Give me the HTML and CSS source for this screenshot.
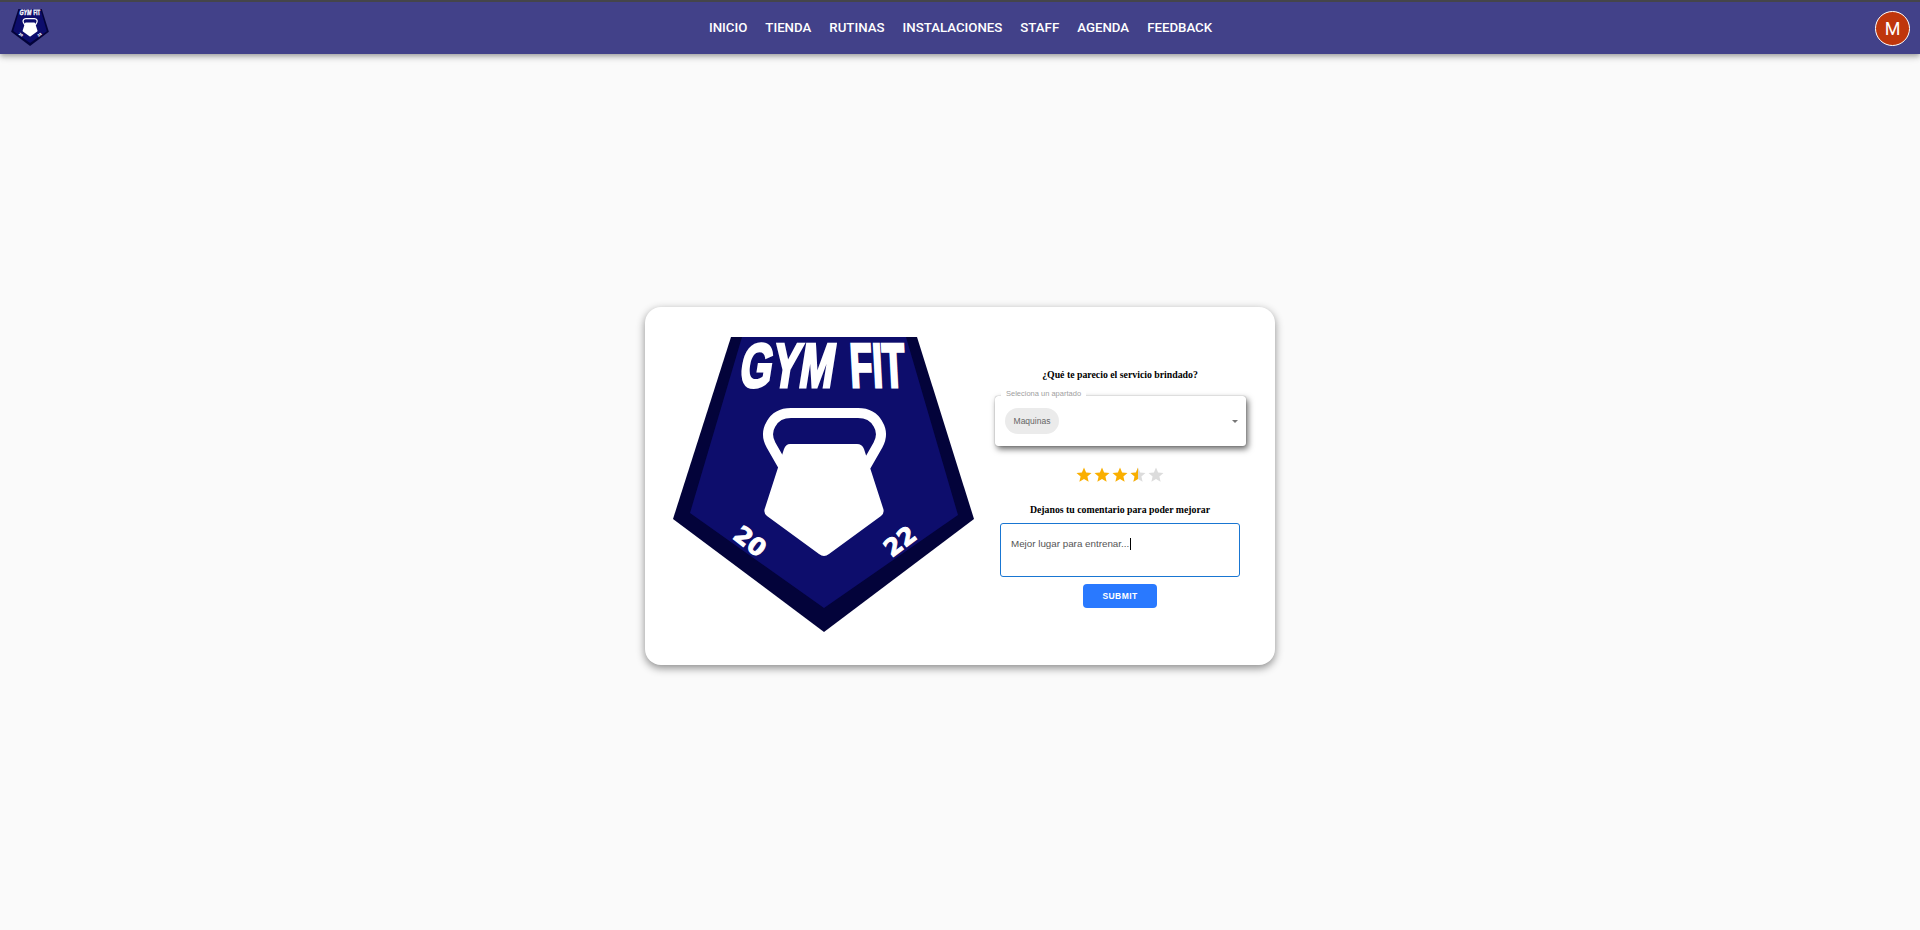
FILE: index.html
```html
<!DOCTYPE html>
<html lang="es">
<head>
<meta charset="utf-8">
<title>Gym Fit - Feedback</title>
<link rel="stylesheet" href="styles.css">
</head>
<body>
<header class="topbar">
  <a class="brand" href="#">
    <svg class="brand-logo" viewBox="673 337 301 295">
      <polygon class="logo-outer" points="731,337 917,337 974,519 824,632 673,519"/>
      <polygon class="logo-inner" points="742,337 906,337 958,515 824,608 690,513"/>
      <path class="logo-handle" d="M783 466 L771 445 Q765 434 771 424 Q777 413 791 413 H858 Q872 413 878 424 Q884 434 878 445 L866 466"/>
      <path class="logo-body" d="M790 444 H857 Q862 444 864 449 L883 508 Q885 513 881 516 L829 554 Q824 558 819 554 L767 516 Q763 513 765 508 L784 449 Q786 444 790 444 Z"/>
      <text class="logo-title" transform="translate(738 387) skewX(-9)" textLength="94" lengthAdjust="spacingAndGlyphs">GYM</text>
      <text class="logo-title" transform="translate(851 387) skewX(3)" textLength="55" lengthAdjust="spacingAndGlyphs">FIT</text>
      <text class="logo-year" transform="translate(745 548) rotate(38)" text-anchor="middle">20</text>
      <text class="logo-year" transform="translate(905 548) rotate(-37)" text-anchor="middle">22</text>
    </svg>
  </a>
  <nav class="nav">
    <a href="#">Inicio</a>
    <a href="#">Tienda</a>
    <a href="#">Rutinas</a>
    <a href="#">Instalaciones</a>
    <a href="#">Staff</a>
    <a href="#">Agenda</a>
    <a href="#">Feedback</a>
  </nav>
  <div class="account"><span class="avatar">M</span></div>
</header>

<main class="page">
  <section class="card">
    <svg class="card-logo" viewBox="673 337 301 295">
      <polygon class="logo-outer" points="731,337 917,337 974,519 824,632 673,519"/>
      <polygon class="logo-inner" points="742,337 906,337 958,515 824,608 690,513"/>
      <path class="logo-handle" d="M783 466 L771 445 Q765 434 771 424 Q777 413 791 413 H858 Q872 413 878 424 Q884 434 878 445 L866 466"/>
      <path class="logo-body" d="M790 444 H857 Q862 444 864 449 L883 508 Q885 513 881 516 L829 554 Q824 558 819 554 L767 516 Q763 513 765 508 L784 449 Q786 444 790 444 Z"/>
      <text class="logo-title" transform="translate(738 387) skewX(-9)" textLength="94" lengthAdjust="spacingAndGlyphs">GYM</text>
      <text class="logo-title" transform="translate(851 387) skewX(3)" textLength="55" lengthAdjust="spacingAndGlyphs">FIT</text>
      <text class="logo-year" transform="translate(745 548) rotate(38)" text-anchor="middle">20</text>
      <text class="logo-year" transform="translate(905 548) rotate(-37)" text-anchor="middle">22</text>
    </svg>
    <form class="form">
      <h4 class="question">¿Qué te parecio el servicio brindado?</h4>
      <div class="select">
        <span class="select-label">Seleciona un apartado</span>
        <span class="chip">Maquinas</span>
        <span class="select-arrow"></span>
      </div>
      <div class="rating">
        <svg class="star full" viewBox="0 0 24 24"><path d="M12 17.27L18.18 21l-1.64-7.03L22 9.24l-7.19-.61L12 2 9.19 8.63 2 9.24l5.46 4.73L5.82 21z"/></svg>
        <svg class="star full" viewBox="0 0 24 24"><path d="M12 17.27L18.18 21l-1.64-7.03L22 9.24l-7.19-.61L12 2 9.19 8.63 2 9.24l5.46 4.73L5.82 21z"/></svg>
        <svg class="star full" viewBox="0 0 24 24"><path d="M12 17.27L18.18 21l-1.64-7.03L22 9.24l-7.19-.61L12 2 9.19 8.63 2 9.24l5.46 4.73L5.82 21z"/></svg>
        <svg class="star" viewBox="0 0 24 24"><path d="M12 17.27L18.18 21l-1.64-7.03L22 9.24l-7.19-.61L12 2 9.19 8.63 2 9.24l5.46 4.73L5.82 21z"/><path class="half" d="M12 2 9.19 8.63 2 9.24l5.46 4.73L5.82 21 12 17.27z"/></svg>
        <svg class="star" viewBox="0 0 24 24"><path d="M12 17.27L18.18 21l-1.64-7.03L22 9.24l-7.19-.61L12 2 9.19 8.63 2 9.24l5.46 4.73L5.82 21z"/></svg>
      </div>
      <h4 class="question second">Dejanos tu comentario para poder mejorar</h4>
      <div class="comment"><span class="comment-text">Mejor lugar para entrenar...</span></div>
      <button class="submit" type="button">Submit</button>
    </form>
  </section>
</main>
</body>
</html>
```

FILE: styles.css
```css
* { box-sizing: border-box; }

html, body {
  margin: 0;
  height: 100%;
}

body {
  background: #fafafa;
  font-family: "Liberation Sans", Arial, sans-serif;
  overflow: hidden;
}

svg { overflow: visible; }

.topbar {
  height: 54px;
  border-top: 2px solid #45454a;
  background: #424189;
  display: flex;
  align-items: center;
  padding: 0 10px 0 11px;
  box-shadow: 0 2px 4px -1px rgba(0,0,0,.2), 0 4px 5px rgba(0,0,0,.14), 0 1px 10px rgba(0,0,0,.12);
  position: relative;
}

.brand {
  flex: 1;
  display: flex;
  margin-top: -2px;
}

.brand-logo {
  width: 38px;
  height: 37px;
}

.nav {
  display: flex;
  justify-content: center;
}

.nav a {
  padding: 6px 8px;
  margin: 0 1px;
  color: #fff;
  font-family: Roboto, "Liberation Sans", sans-serif;
  text-decoration: none;
  text-transform: uppercase;
  font-size: 13.25px;
  font-weight: 500;
  line-height: 24px;
}

.account {
  flex: 1;
  display: flex;
  justify-content: flex-end;
}

.avatar {
  width: 35px;
  height: 35px;
  border-radius: 50%;
  border: 1px solid #fff;
  background: #bf360c;
  color: #fff;
  font-family: Roboto, "Liberation Sans", sans-serif;
  font-size: 18px;
  display: flex;
  align-items: center;
  justify-content: center;
}

.page {
  height: 876px;
  display: flex;
  align-items: flex-start;
  justify-content: center;
  padding-top: 253px;
}

.card {
  width: 630px;
  height: 358px;
  background: #fff;
  border-radius: 16px;
  box-shadow: 0 3px 8px rgba(0,0,0,.45);
  display: flex;
  align-items: flex-start;
  padding: 30px 29px 0 28px;
  gap: 21px;
}

.card-logo {
  width: 301px;
  height: 295px;
  flex: none;
}

.logo-outer { fill: #03033a; }
.logo-inner { fill: #0d0d6c; }
.logo-handle { fill: none; stroke: #fff; stroke-width: 10; }
.logo-body { fill: #fff; }

.logo-title {
  font-family: "Liberation Sans", sans-serif;
  font-weight: 700;
  font-size: 62px;
  fill: #fff;
  stroke: #fff;
  stroke-width: 3;
}

.logo-year {
  font-family: "DejaVu Sans", sans-serif;
  font-weight: 700;
  font-size: 24px;
  fill: #fff;
  stroke: #fff;
  stroke-width: 1;
}

.form {
  flex: 1;
  display: flex;
  flex-direction: column;
  align-items: center;
  padding: 31px 1px 0 0;
}

.question {
  margin: 0;
  font-family: "Liberation Serif", serif;
  font-size: 9.8px;
  line-height: 14px;
  font-weight: 700;
  color: #000;
  text-align: center;
}

.select {
  position: relative;
  width: 251px;
  height: 50px;
  margin: 14px -1px 0 0;
  background: #fff;
  border-radius: 3px;
  box-shadow: 2px 3px 6px rgba(0,0,0,.6), 0 0 1px rgba(0,0,0,.5);
  display: flex;
  align-items: center;
  padding-left: 10px;
}

.select-label {
  position: absolute;
  left: 6px;
  top: -7px;
  padding: 0 5px;
  background: #fff;
  font-size: 7.5px;
  line-height: 10px;
  color: #a0a0a0;
}

.chip {
  width: 54px;
  height: 26px;
  border-radius: 13px;
  background: #ebebeb;
  color: #666;
  font-size: 8.5px;
  display: flex;
  align-items: center;
  justify-content: center;
}

.select-arrow {
  position: absolute;
  right: 8px;
  top: 24px;
  border-left: 3px solid transparent;
  border-right: 3px solid transparent;
  border-top: 3px solid #777;
}

.rating {
  display: flex;
  margin-top: 20px;
  height: 18px;
}

.star {
  width: 18px;
  height: 18px;
  fill: #dcdcdc;
}

.star.full,
.half { fill: #faaf00; }

.second { margin-top: 19px; }

.comment {
  width: 240px;
  height: 54px;
  margin-top: 6px;
  border: 1.5px solid #1976d2;
  border-radius: 3px;
  padding: 9px 10px;
  background: #fff;
}

.comment-text {
  display: inline-block;
  font-size: 9.8px;
  line-height: 12px;
  color: #555;
  border-right: 1px solid #000;
  padding-right: 1px;
}

.submit {
  width: 74px;
  height: 24px;
  margin-top: 7px;
  border: 0;
  border-radius: 4px;
  background: #2979ff;
  color: #fff;
  font-family: inherit;
  font-size: 8.5px;
  font-weight: 700;
  letter-spacing: .4px;
  text-transform: uppercase;
  padding: 0;
}
```
